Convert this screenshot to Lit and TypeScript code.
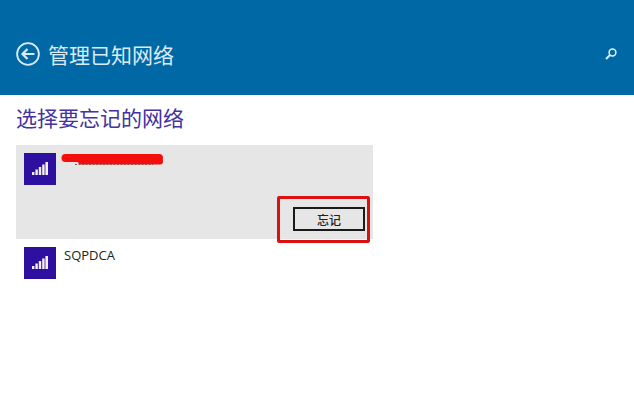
import { LitElement, html, svg, css } from "lit";
import { customElement } from "lit/decorators.js";

const signalIcon = svg`
  <svg class="bars" viewBox="0 0 32 32" width="32" height="32">
    <rect x="8" y="19" width="2.4" height="3" fill="#f4f1fb" />
    <rect x="11.4" y="16.5" width="2.4" height="5.5" fill="#f4f1fb" />
    <rect x="14.8" y="14" width="2.4" height="8" fill="#f4f1fb" />
    <rect x="18.2" y="11.5" width="2.4" height="10.5" fill="#f4f1fb" />
    <rect x="21.4" y="9" width="2.6" height="13" fill="#f4f1fb" />
  </svg>`;

@customElement("app-root")
export class AppRoot extends LitElement {
  static styles = css`
    :host {
      display: block;
      width: 634px;
      height: 400px;
      background: #fff;
      overflow: hidden;
      font-family: "Liberation Sans", "Noto Sans CJK SC", sans-serif;
    }
    .header {
      height: 95px;
      box-sizing: border-box;
      background: #0068a5;
      display: flex;
      align-items: center;
      padding: 12px 16px 0 16px;
      color: #d9ebf5;
    }
    .header svg {
      display: block;
      flex: none;
    }
    .title {
      margin: 0 0 0 8px;
      font-size: 21px;
      font-weight: 400;
      line-height: 28px;
      flex: 1;
      font-family: "Noto Sans CJK SC", sans-serif;
    }
    .heading {
      margin: 9px 0 0 16px;
      height: 41px;
      font-size: 21px;
      line-height: 26px;
      font-weight: 400;
      color: #43329f;
      font-family: "Noto Sans CJK SC", sans-serif;
    }
    .list {
      width: 357px;
      margin-left: 16px;
    }
    .item {
      display: flex;
      gap: 8px;
      padding: 8px;
      position: relative;
    }
    .item.selected {
      height: 94px;
      box-sizing: border-box;
      background: #e6e6e6;
    }
    .tile {
      width: 32px;
      height: 32px;
      background: #2e10a0;
      flex: none;
    }
    .bars {
      display: block;
    }
    .name {
      font-size: 13px;
      line-height: 16px;
      color: #222;
      font-family: "Open Sans", sans-serif;
    }
    .actions {
      flex: 1;
      display: flex;
      justify-content: flex-end;
      align-items: flex-end;
    }
    button {
      width: 72px;
      height: 24px;
      border: 2px solid #1a1a1a;
      background: #e6e6e6;
      padding: 0;
      font-size: 12px;
      font-weight: 500;
      color: #222;
      font-family: "Noto Sans CJK SC", sans-serif;
    }
    /* hand-drawn annotations on top of the screenshot */
    .scribble {
      position: absolute;
      left: 45px;
      top: 8px;
      width: 104px;
      height: 13px;
    }
    .callout {
      position: absolute;
      left: 261px;
      top: 51px;
      width: 93px;
      height: 47px;
      box-sizing: border-box;
      border: 3px solid #dd1010;
      border-radius: 2px;
    }
  `;

  render() {
    return html`
      <div class="header">
        <svg viewBox="0 0 24 24" width="24" height="24" fill="none" stroke="#d9ebf5">
          <circle cx="12" cy="12" r="10.9" stroke-width="1.8" />
          <path d="M18.5 12H7M11.5 7l-5 5 5 5" stroke-width="2.2" />
        </svg>
        <h1 class="title">管理已知网络</h1>
        <svg viewBox="0 0 14 14" width="14" height="14" fill="none" stroke="#e4f1f8">
          <circle cx="8.5" cy="5.5" r="3.4" stroke-width="1.5" />
          <path d="M6 8l-4 4" stroke-width="2" />
        </svg>
      </div>
      <h2 class="heading">选择要忘记的网络</h2>
      <div class="list">
        <div class="item selected">
          <div class="tile">${signalIcon}</div>
          <div class="actions"><button>忘记</button></div>
          <svg class="scribble" viewBox="0 0 104 13">
            <path d="M4.5 5H98" stroke="#f40d0d" stroke-width="8" stroke-linecap="round" />
            <path d="M20 8.5H99" stroke="#f40d0d" stroke-width="6" stroke-linecap="round" />
            <path d="M14 11.5H92" stroke="#8a5a50" stroke-width="1" stroke-dasharray="2 1.5" />
          </svg>
          <div class="callout"></div>
        </div>
        <div class="item">
          <div class="tile">${signalIcon}</div>
          <div class="name">SQPDCA</div>
        </div>
      </div>
    `;
  }
}
